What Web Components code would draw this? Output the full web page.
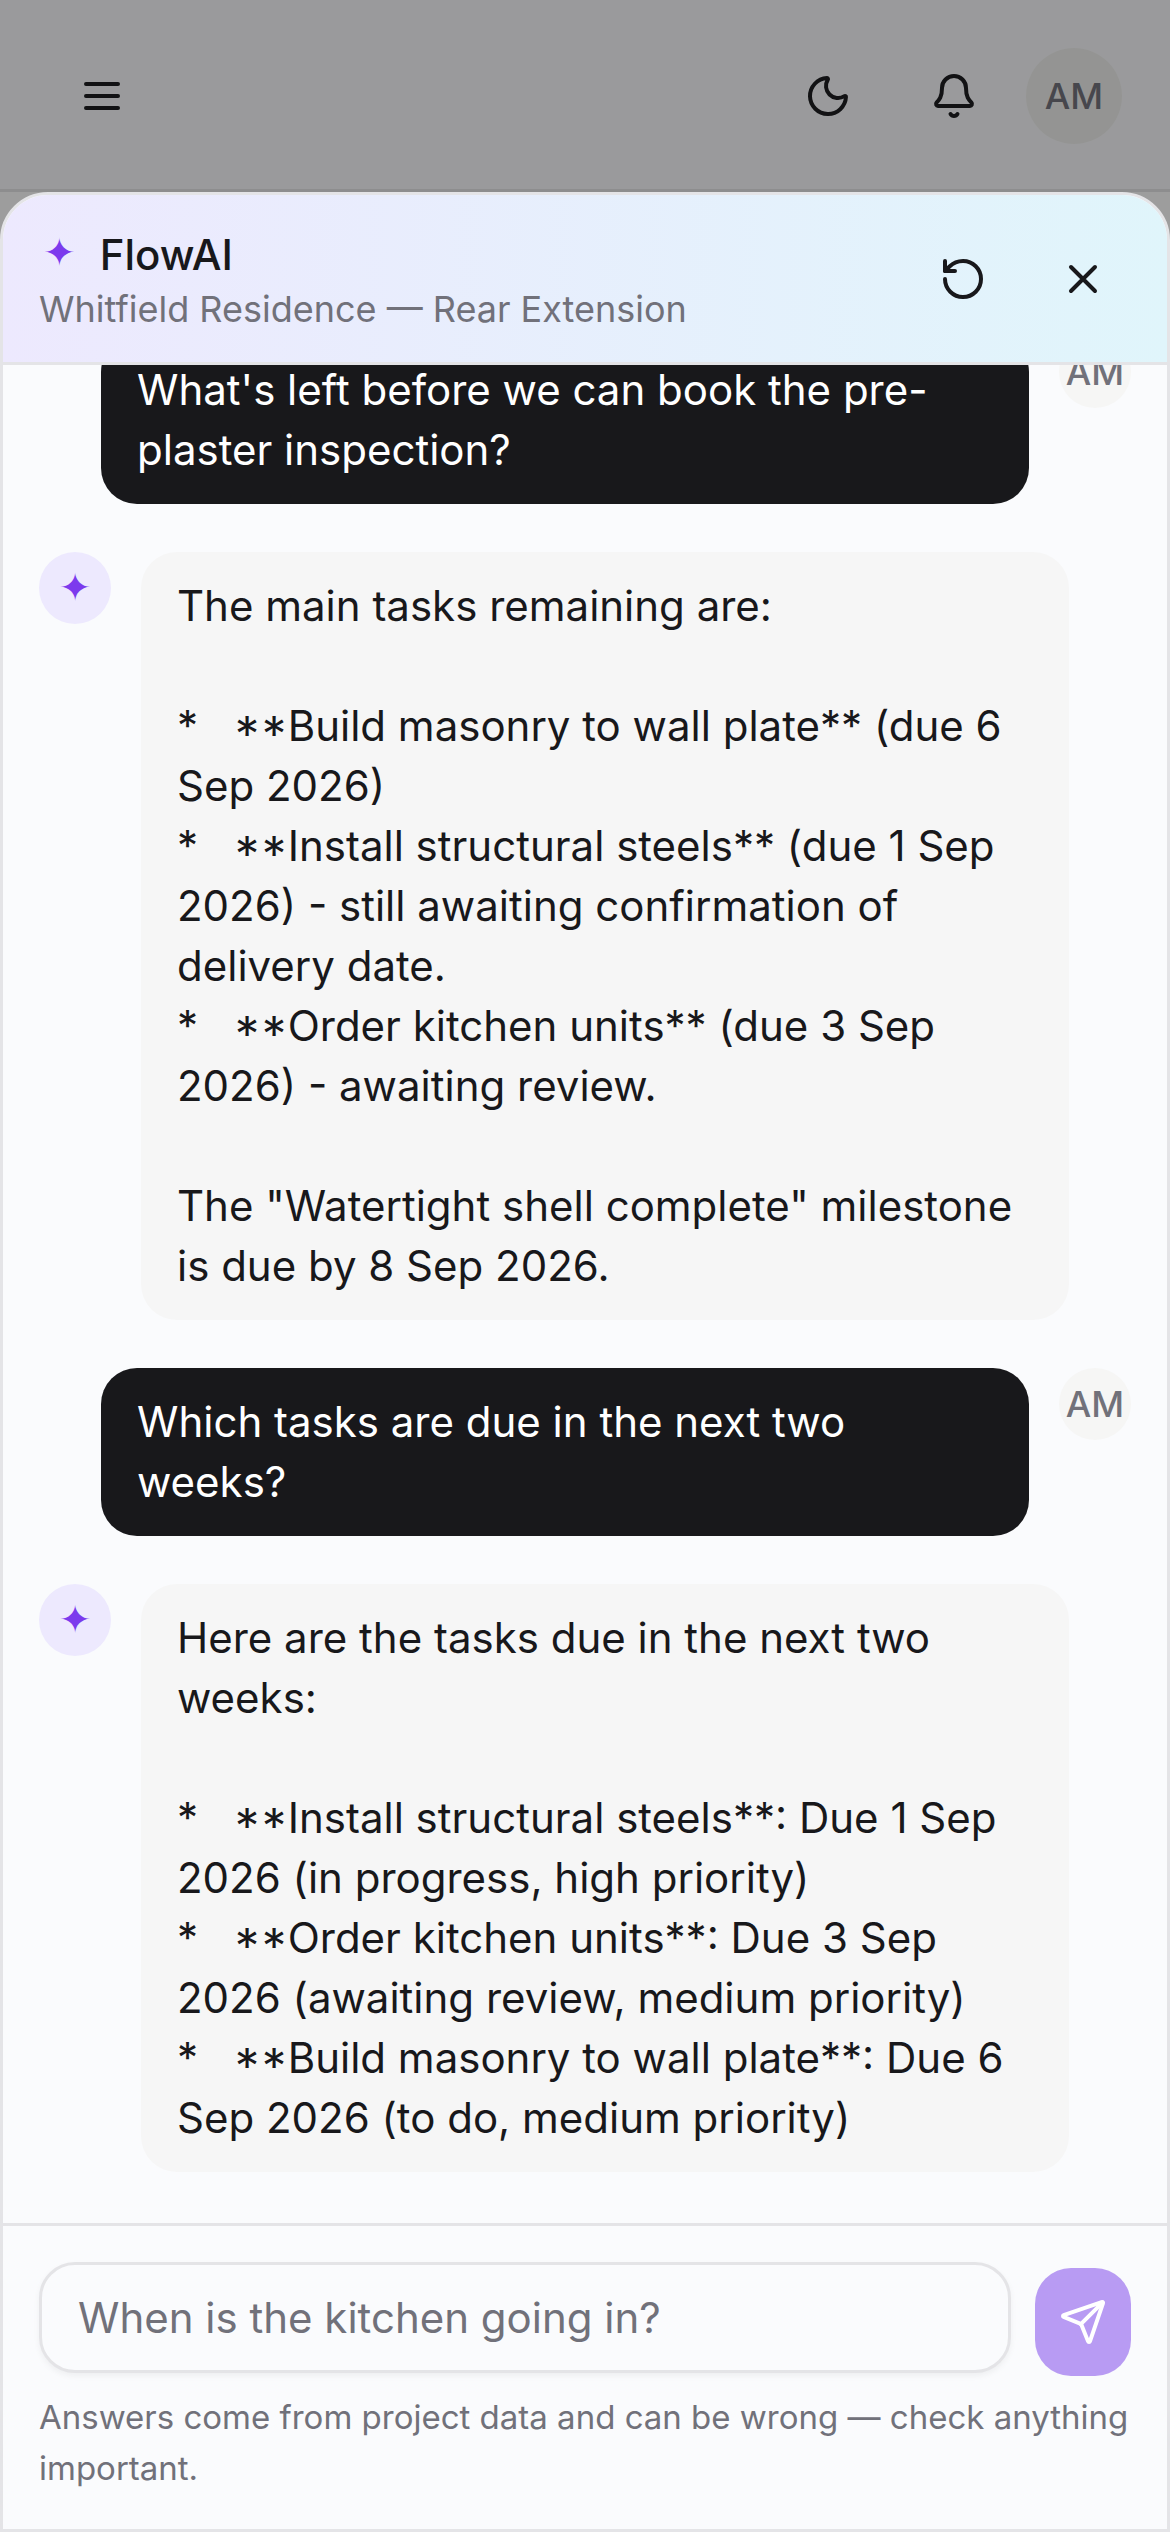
<!doctype html>
<html lang="en"><head><meta charset="utf-8"><title>FlowAI</title>
<style>
html,body{margin:0;padding:0;width:1170px;height:2532px;overflow:hidden;background:#fff;font-family:Inter,"Noto Sans",sans-serif;color:#18181b}
</style></head><body>
<app-shell>
  <app-bar slot="bar"></app-bar>
  <chat-panel slot="panel" subtitle="Whitfield Residence — Rear Extension">
    <chat-message role="user">What's left before we can book the pre-<br>plaster inspection?</chat-message>
    <chat-message role="ai">The main tasks remaining are:<br><br>*   <md-mark>**</md-mark>Build masonry to wall plate** (due 6 <br>Sep 2026)<br>*   <md-mark>**</md-mark>Install structural steels** (due 1 Sep <br>2026) - still awaiting confirmation of <br>delivery date.<br>*   <md-mark>**</md-mark>Order kitchen units** (due 3 Sep <br>2026) - awaiting review.<br><br>The "Watertight shell complete" milestone <br>is due by 8 Sep 2026.</chat-message>
    <chat-message role="user">Which tasks are due in the next two <br>weeks?</chat-message>
    <chat-message role="ai">Here are the tasks due in the next two <br>weeks:<br><br>*   <md-mark>**</md-mark>Install structural steels**: Due 1 Sep <br>2026 (in progress, high priority)<br>*   <md-mark>**</md-mark>Order kitchen units**: Due 3 Sep <br>2026 (awaiting review, medium priority)<br>*   <md-mark>**</md-mark>Build masonry to wall plate**: Due 6 <br>Sep 2026 (to do, medium priority)</chat-message>
  </chat-panel>
</app-shell>
<script>
const icon=(p,s=48)=>`<svg width="${s}" height="${s}" viewBox="0 0 24 24" fill="none" stroke="currentColor" stroke-width="2" stroke-linecap="round" stroke-linejoin="round" aria-hidden="true">${p}</svg>`;
const I={
 menu:'<path d="M4 6h16M4 12h16M4 18h16"/>',
 moon:'<path d="M20.985 12.486a9 9 0 1 1-9.473-9.472c.405-.022.617.46.402.803a6 6 0 0 0 8.268 8.268c.344-.215.825-.004.803.401"/>',
 bell:'<path d="M10.268 21a2 2 0 0 0 3.464 0"/><path d="M3.262 15.326A1 1 0 0 0 4 17h16a1 1 0 0 0 .74-1.673C19.41 13.956 18 12.499 18 8A6 6 0 0 0 6 8c0 4.499-1.411 5.956-2.738 7.326"/>',
 reset:'<path d="M3 12a9 9 0 1 0 9-9 9.75 9.75 0 0 0-6.74 2.74L3 8"/><path d="M3 3v5h5"/>',
 x:'<path d="M18 6 6 18M6 6l12 12"/>',
 send:'<path d="M14.536 21.686a.5.5 0 0 0 .937-.024l6.5-19a.496.496 0 0 0-.635-.635l-19 6.5a.5.5 0 0 0-.024.937l7.93 3.18a2 2 0 0 1 1.112 1.11z"/><path d="m21.854 2.147-10.94 10.939"/>'
};
function def(name,html,init){customElements.define(name,class extends HTMLElement{constructor(){super();this.attachShadow({mode:'open'}).innerHTML=html;}connectedCallback(){init&&init(this)}})}
def('md-mark',`<style>:host{display:inline;font-feature-settings:"case" 1}</style><slot></slot>`);
def('app-shell',`<style>
:host{display:flex;flex-direction:column;width:1170px;height:2532px;position:relative}
.scrim{position:absolute;inset:0;background:rgba(9,9,11,.4);z-index:1}
.panel{flex:1;min-height:0;display:flex;position:relative;z-index:2}
</style><slot name="bar"></slot><div class="scrim"></div><div class="panel"><slot name="panel"></slot></div>`);
def('app-bar',`<style>
:host{display:flex;align-items:center;box-sizing:border-box;height:192px;padding:3px 48px 0 78px;border-bottom:3px solid #e4e4e7;background:#fafbfd;color:#18181b}
.sp{flex:1}
svg{display:block}
.i{display:flex}
.av{width:96px;height:96px;border-radius:50%;background:#f1f1ef;color:#71717a;font:550 36px/96px Inter,sans-serif;text-align:center;margin-left:48px}
</style><div class="i">${icon(I.menu)}</div><div class="sp"></div><div class="i" style="margin-right:78px">${icon(I.moon)}</div><div class="i">${icon(I.bell)}</div><div class="av">AM</div>`);
def('chat-panel',`<style>
:host{flex:1;min-width:0;display:flex;flex-direction:column;box-sizing:border-box;border:3px solid #e4e4e7;border-radius:48px 48px 0 0;background:#fafbfd;overflow:hidden}
header{flex:none;display:flex;align-items:center;box-sizing:border-box;height:170px;padding:0 60px 0 36px;background:linear-gradient(90deg,#ede9fe,#e0f5fb);border-bottom:3px solid #e4e4e7;position:relative;z-index:1}
.t{flex:1;min-width:0;display:flex;flex-direction:column}
.h{display:flex;align-items:center;gap:24px;font:500 42px/60px Inter,sans-serif;color:#18181b}
.h b{font:400 39px/56px "DejaVu Sans",sans-serif;color:#7c3aed;margin:-4px 0 0 4px}
.s{font:400 36px/48px Inter,sans-serif;color:#71717a}
.b{display:flex;width:48px;height:48px;margin-left:72px}
.list{flex:1;min-height:0;display:flex;flex-direction:column;justify-content:flex-end;gap:48px;padding:0 36px 51px;overflow:hidden}
footer{flex:none;border-top:3px solid #e4e4e7;padding:36px 36px 35px}
.row{display:flex;gap:24px;height:114px}
.in{flex:1;box-sizing:border-box;height:111px;border:3px solid #e4e4e7;border-radius:36px;padding:0 36px;font:400 42px/60px Inter,sans-serif;color:#71717a;display:flex;align-items:center;box-shadow:0 3px 6px rgba(0,0,0,.05);background:#fafbfd}
.send{align-self:flex-end;width:96px;height:108px;border-radius:36px;background:#b89bf3;color:#fff;display:flex;align-items:center;justify-content:center}
.note{font:400 33px/51px Inter,sans-serif;color:#71717a;margin:16px 0 0}
</style><header><div class="t"><div class="h"><b>✦</b><span>FlowAI</span></div><div class="s"></div></div><div class="b">${icon(I.reset)}</div><div class="b">${icon(I.x)}</div></header>
<div class="list"><slot></slot></div>
<footer><div class="row"><div class="in">When is the kitchen going in?</div><div class="send">${icon(I.send)}</div></div><p class="note">Answers come from project data and can be wrong — check anything important.</p></footer>`,
el=>{el.shadowRoot.querySelector('.s').textContent=el.getAttribute('subtitle')});
def('chat-message',`<style>
:host{display:flex;gap:30px;align-items:flex-start;flex:none}
:host([role=user]){justify-content:flex-end}
.av{flex:none;width:72px;height:72px;border-radius:50%;display:flex;align-items:center;justify-content:center}
.ai{background:#ede9fe;color:#7c3aed;font:400 39px/68px "DejaVu Sans",sans-serif}
.me{background:#f6f6f5;color:#71717a;font:500 36px/72px Inter,sans-serif}
.bub{box-sizing:border-box;max-width:928px;width:928px;padding:24px 36px;border-radius:36px;font:400 42px/60px Inter,sans-serif;white-space:pre-wrap}
:host([role=ai]) .bub{background:#f6f6f6;color:#18181b}
:host([role=user]) .bub{background:#18181b;color:#fff}
</style><div class="av"></div><div class="bub"><slot></slot></div>`,
el=>{const a=el.shadowRoot.querySelector('.av'),u=el.getAttribute('role')==='user';a.className='av '+(u?'me':'ai');a.textContent=u?'AM':'✦';if(u)el.shadowRoot.appendChild(a)});
</script>
</body></html>
